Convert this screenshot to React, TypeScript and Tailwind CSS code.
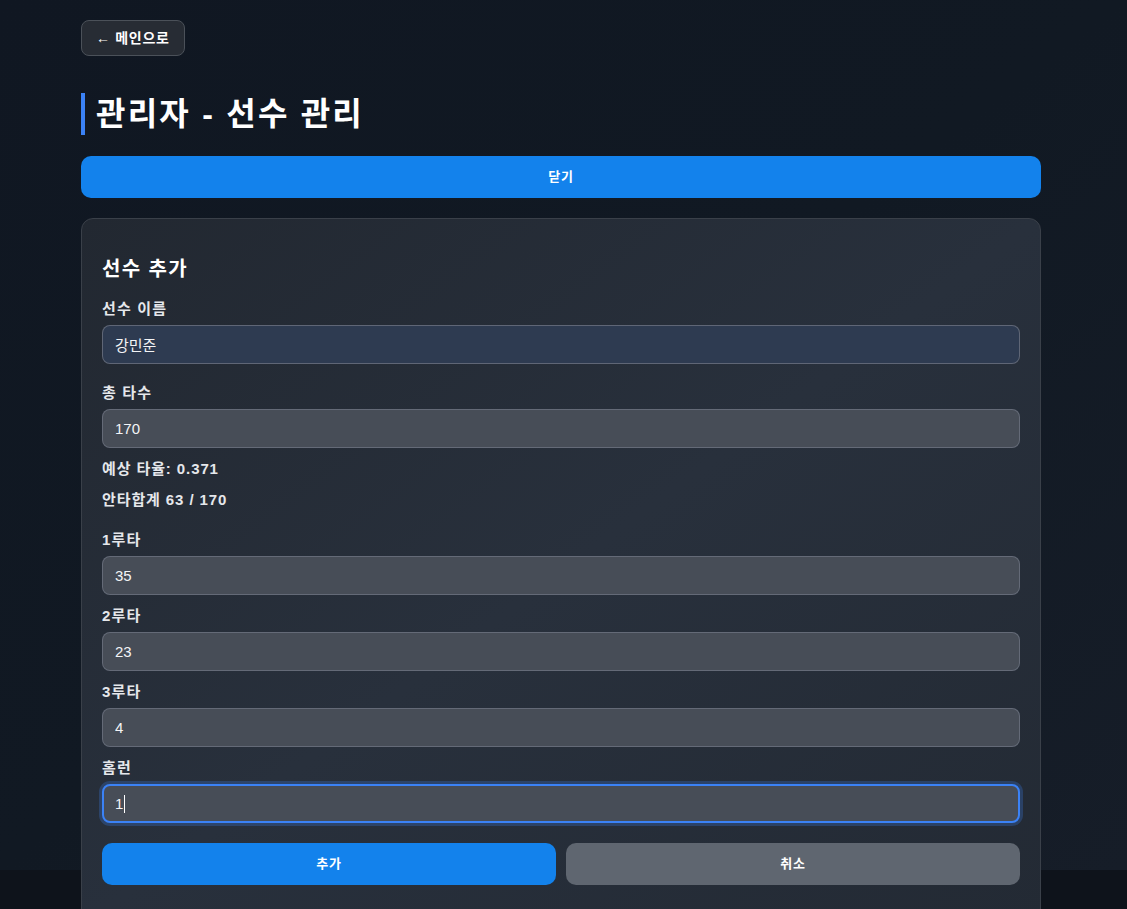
const font = "font-['Liberation_Sans','Noto_Sans_CJK_KR',sans-serif]";

const hitFields = [
  { label: "1루타", value: "35" },
  { label: "2루타", value: "23" },
  { label: "3루타", value: "4" },
];

function Field({ label, value, tone = "gray" }: { label: string; value: string; tone?: "gray" | "blue" }) {
  return (
    <div className="flex flex-col gap-[5px]">
      <label className="text-[15px] leading-[22px] font-bold tracking-[0.08em] text-[#e5e7eb]">{label}</label>
      <input
        defaultValue={value}
        className={`h-[39px] w-full rounded-lg border border-[#6b7280]/80 px-3 text-[15px] tracking-normal text-[#f3f4f6] outline-none ${
          tone === "blue" ? "bg-[#2e3b51]" : "bg-[#474d57]"
        }`}
      />
    </div>
  );
}

export default function App() {
  return (
    <div className={`relative min-h-screen bg-[#0e131b] ${font}`}>
      {/* page gradient stops short of the fold */}
      <div className="absolute inset-x-0 top-0 h-[870px] bg-gradient-to-br from-[#101722] via-[#111923] to-[#161d28]" />

      <div className="relative pl-[81px] pr-[86px] pt-5">
        <button className="h-9 rounded-lg border border-[#4b5159] bg-[#272c34] px-[14px] text-[14px] font-bold tracking-[0.05em] text-white">
          ← 메인으로
        </button>

        <h1 className="mt-[37px] border-l-4 border-[#3b82f6] pl-[11px] text-[32px] leading-[42px] font-bold tracking-[0.07em] text-white">
          관리자 - 선수 관리
        </h1>

        <button className="mt-[21px] h-[42px] w-full rounded-[10px] bg-[#1382ec] text-[13px] font-bold tracking-[0.06em] text-white">
          닫기
        </button>

        <div className="mt-5 rounded-xl border border-[#3a4049] bg-gradient-to-br from-[#222831] via-[#28303c] to-[#232a34] px-5 pt-9 pb-10">
          <h3 className="text-[20px] leading-7 font-bold tracking-[0.07em] text-white">선수 추가</h3>

          <div className="mt-[15px]">
            <Field label="선수 이름" value="강민준" tone="blue" />
          </div>
          <div className="mt-[18px]">
            <Field label="총 타수" value="170" />
          </div>

          <p className="mt-[10px] text-[15px] leading-[22px] font-bold tracking-[0.06em] text-[#e5e7eb]">예상 타율: 0.371</p>
          <p className="mt-[9px] text-[15px] leading-[22px] font-bold tracking-[0.06em] text-[#e5e7eb]">안타합계 63 / 170</p>

          <div className="mt-[18px] flex flex-col gap-[10px]">
            {hitFields.map((f) => (
              <Field key={f.label} label={f.label} value={f.value} />
            ))}
            <div className="flex flex-col gap-[5px]">
              <label className="text-[15px] leading-[22px] font-bold tracking-[0.08em] text-[#e5e7eb]">홈런</label>
              <div className="relative">
                <input
                  defaultValue="1"
                  className="h-[39px] w-full rounded-lg border-2 border-[#3b82f6] bg-[#474d57] px-[11px] text-[15px] tracking-normal text-[#f3f4f6] outline-none ring-[3px] ring-[#3b82f6]/25"
                />
                <span className="pointer-events-none absolute left-[22px] top-[11px] h-[18px] w-px bg-white" />
              </div>
            </div>
          </div>

          <div className="mt-5 flex gap-[10px]">
            <button className="h-[42px] flex-1 rounded-[10px] bg-[#1382ec] text-[13px] font-bold tracking-[0.06em] text-white">추가</button>
            <button className="h-[42px] flex-1 rounded-[10px] bg-[#5f6670] text-[13px] font-bold tracking-[0.06em] text-white">취소</button>
          </div>
        </div>
      </div>
    </div>
  );
}
